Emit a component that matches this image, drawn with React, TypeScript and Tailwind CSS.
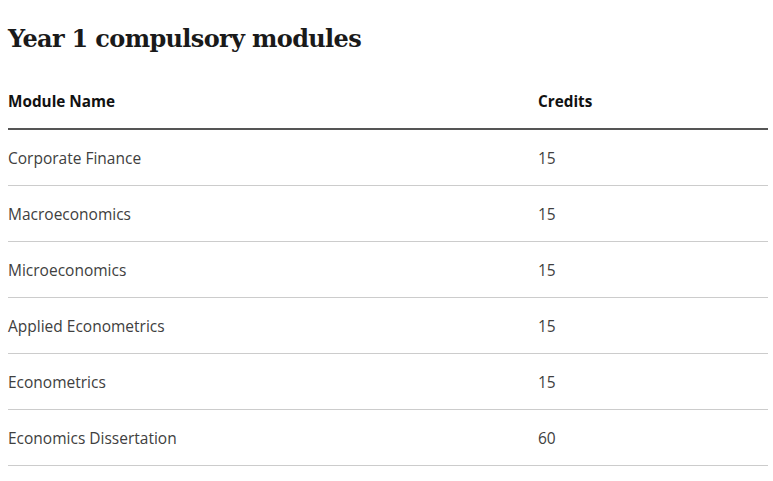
import React from "react";

const rows: [string, string][] = [
  ["Corporate Finance", "15"],
  ["Macroeconomics", "15"],
  ["Microeconomics", "15"],
  ["Applied Econometrics", "15"],
  ["Econometrics", "15"],
  ["Economics Dissertation", "60"],
];

export default function App() {
  return (
    <div className="min-h-[481px] bg-white pl-2 pr-[5px] pt-[22px]" style={{ fontFamily: "'Open Sans', Lato, sans-serif" }}>
      <h1
        className="text-[24px] leading-[34px] font-bold text-[#1a1a1a] tracking-[-0.65px]"
        style={{ fontFamily: "'DejaVu Serif', 'Liberation Serif', serif" }}
      >
        Year 1 compulsory modules
      </h1>
      <div className="mt-[18px]">
        <div className="flex h-[56px] items-center border-b-2 border-[#555555] text-[15.3px] font-bold text-[#111111]">
          <div className="w-[530px]">Module Name</div>
          <div>Credits</div>
        </div>
        {rows.map(([name, credits]) => (
          <div
            key={name}
            className="flex h-[56px] items-center border-b border-[#cccccc] pt-[2px] text-[15.5px] text-[#404040]"
          >
            <div className="w-[530px]">{name}</div>
            <div>{credits}</div>
          </div>
        ))}
      </div>
    </div>
  );
}
